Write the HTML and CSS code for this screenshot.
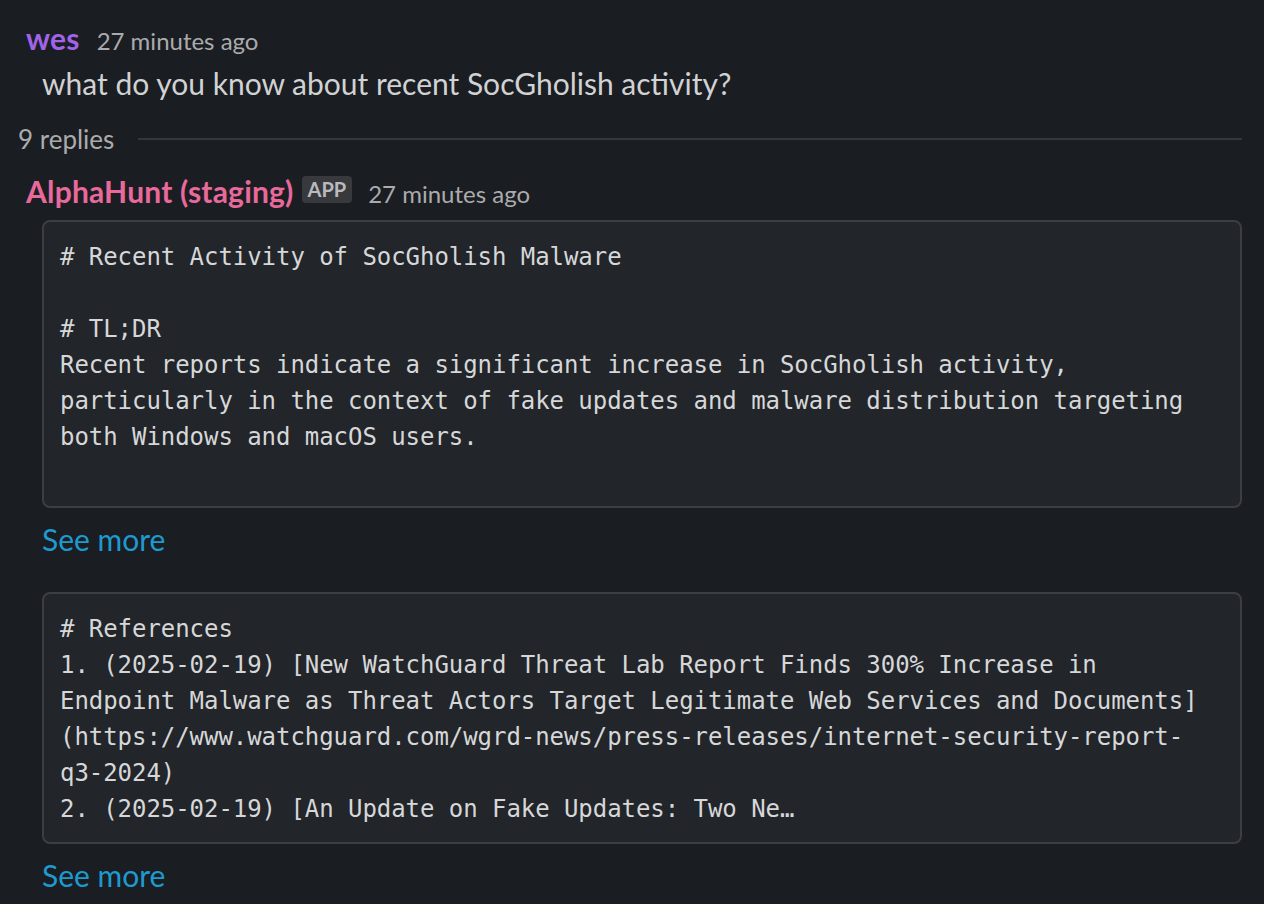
FILE: index.html
```html
<!DOCTYPE html>
<html lang="en">
<head>
<meta charset="utf-8">
<title>Thread</title>
<link rel="stylesheet" href="styles.css">
</head>
<body>
<div class="thread">
  <div class="msg msg-parent">
    <div class="head">
      <span class="name name-wes">wes</span>
      <span class="ts">27 minutes ago</span>
    </div>
    <div class="body">
      <p class="text">what do you know about recent SocGholish activity?</p>
    </div>
  </div>

  <div class="replies">
    <span class="replies-count">9 replies</span>
    <span class="replies-line"></span>
  </div>

  <div class="msg msg-reply">
    <div class="head">
      <span class="name name-bot">AlphaHunt (staging)</span>
      <span class="badge">APP</span>
      <span class="ts">27 minutes ago</span>
    </div>
    <div class="body">
      <pre class="code"># Recent Activity of SocGholish Malware

# TL;DR
Recent reports indicate a significant increase in SocGholish activity,
particularly in the context of fake updates and malware distribution targeting
both Windows and macOS users.
 </pre>
      <a class="see-more" href="#">See more</a>
      <pre class="code code-refs"># References
1. (2025-02-19) [New WatchGuard Threat Lab Report Finds 300% Increase in
Endpoint Malware as Threat Actors Target Legitimate Web Services and Documents]
(https://www.watchguard.com/wgrd-news/press-releases/internet-security-report-
q3-2024)
2. (2025-02-19) [An Update on Fake Updates: Two Ne…</pre>
      <a class="see-more" href="#">See more</a>
    </div>
  </div>
</div>
</body>
</html>
```

FILE: styles.css
```css
html, body {
  margin: 0;
  padding: 0;
  background: #1a1d21;
}

body {
  font-family: Lato, "Liberation Sans", sans-serif;
  color: #d1d2d3;
}

.thread {
  padding: 16px 22px 0 0;
}

.msg {
  padding-left: 26px;
}

.head {
  display: flex;
  align-items: baseline;
  height: 44px;
  line-height: 44px;
}

.name {
  font-weight: 700;
  font-size: 30px;
  letter-spacing: 0.2px;
}

.name-wes {
  color: #a064e8;
  margin-right: 17px;
}

.name-bot {
  color: #e8699b;
  margin-right: 8px;
}

.badge {
  align-self: center;
  font-size: 20px;
  font-weight: 700;
  line-height: 27px;
  height: 27px;
  padding: 0 6px;
  border-radius: 4px;
  background: #38393d;
  color: #b9babd;
  margin-right: 16px;
  position: relative;
  top: -2px;
}

.ts {
  font-size: 24px;
  color: #ababad;
}

.body {
  padding-left: 16px;
}

.text {
  margin: 1px 0 0;
  font-size: 30px;
  line-height: 44px;
}

.replies {
  display: flex;
  align-items: center;
  gap: 24px;
  margin-top: 16px;
  padding-left: 18px;
  height: 36px;
}

.replies-count {
  font-size: 26px;
  color: #ababad;
  white-space: nowrap;
}

.replies-line {
  flex: 1;
  height: 2px;
  background: #35373b;
}

.msg-reply {
  margin-top: 12px;
}

.msg-reply .head {
  margin-bottom: 7px;
}

.code {
  margin: 0;
  padding: 17px 16px 15px;
  background: #222529;
  border: 2px solid #3c3e42;
  border-radius: 8px;
  font-family: "DejaVu Sans Mono", "Liberation Mono", monospace;
  font-size: 24px;
  line-height: 36px;
  letter-spacing: -0.05px;
  color: #d6d7d8;
  white-space: pre;
  overflow: hidden;
}

.code-refs {
  margin-top: 31px;
}

.see-more {
  display: block;
  margin-top: 9px;
  font-size: 30px;
  line-height: 44px;
  color: #1d9bd1;
  text-decoration: none;
}
```
